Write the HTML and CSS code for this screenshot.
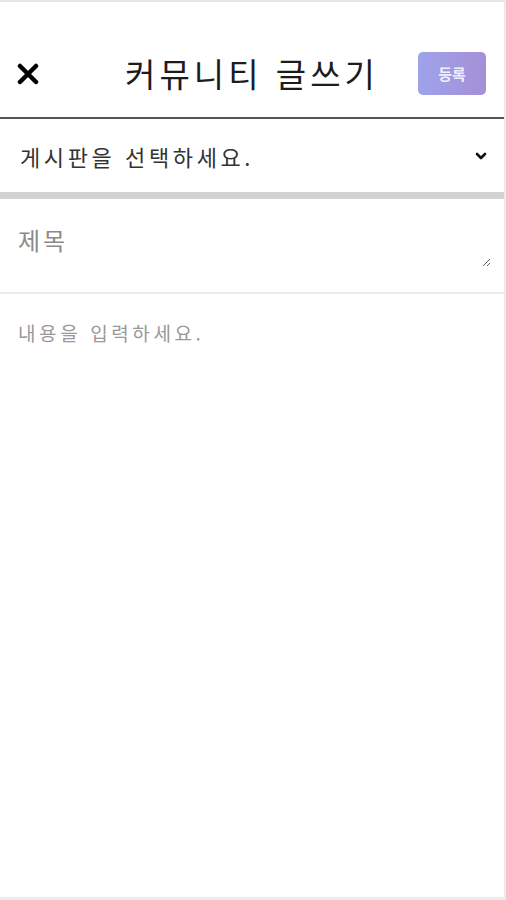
FILE: index.html
```html
<!DOCTYPE html>
<html lang="ko">
<head>
    <meta charset="UTF-8">
    <meta name="viewport" content="width=device-width, initial-scale=1.0">
    <title>커뮤니티 글쓰기</title>
    <link rel="stylesheet" href="styles.css">
</head>
<body>
    <div class="page">
        <div class="header">
            <button class="close-btn" aria-label="닫기">
                <svg width="22" height="22" viewBox="0 0 22 22">
                    <path d="M3 3 L19 19 M19 3 L3 19" stroke="#000" stroke-width="4.5" stroke-linecap="round"/>
                </svg>
            </button>
            <h1 class="title">커뮤니티 글쓰기</h1>
            <button class="submit-btn">등록</button>
        </div>
        <div class="board-select">
            <span class="board-text">게시판을 선택하세요.</span>
            <svg class="chevron" width="12" height="8" viewBox="0 0 12 8">
                <path d="M2 2 L6 6 L10 2" stroke="#111" stroke-width="2.6" fill="none" stroke-linecap="round" stroke-linejoin="round"/>
            </svg>
        </div>
        <div class="divider"></div>
        <div class="subject-row">
            <textarea class="subject" placeholder="제목"></textarea>
        </div>
        <textarea class="content" placeholder="내용을 입력하세요."></textarea>
    </div>
</body>
</html>
```

FILE: styles.css
```css
html, body {
    margin: 0;
    padding: 0;
    background: #fff;
}
body {
    font-family: "Noto Sans CJK KR", "Noto Sans", sans-serif;
}
.page {
    height: 900px;
    box-sizing: border-box;
    border-top: 2px solid #e6e6e6;
    border-right: 2px solid #ececec;
    border-bottom: 3px solid #ececec;
    display: flex;
    flex-direction: column;
}
.header {
    display: flex;
    align-items: center;
    justify-content: space-between;
    padding: 50px 18px 22px 17px;
    border-bottom: 2px solid #555;
}
.close-btn {
    width: 23px;
    height: 43px;
    padding: 0;
    border: none;
    background: none;
    display: flex;
    align-items: center;
}
.title {
    margin: 0 0 0 46px;
    font-size: 33px;
    font-weight: 400;
    color: #1c1c1c;
    line-height: 43px;
    letter-spacing: 4px;
}
.submit-btn {
    width: 68px;
    height: 43px;
    border: none;
    border-radius: 5px;
    background: linear-gradient(90deg, #9ea3ea, #a58fd6);
    color: #eef0ff;
    font-family: inherit;
    font-size: 15px;
    font-weight: 700;
}
.board-select {
    height: 73px;
    display: flex;
    align-items: center;
    justify-content: space-between;
    padding: 0 17px 0 20px;
}
.board-text {
    font-size: 22px;
    color: #333;
    letter-spacing: 3.6px;
}
.divider {
    height: 7px;
    background: #d3d3d3;
}
.subject-row {
    height: 95px;
    box-sizing: border-box;
    border-bottom: 2px solid #ececec;
    padding: 0 13px 0 16px;
}
textarea {
    display: block;
    width: 100%;
    box-sizing: border-box;
    border: none;
    outline: none;
    font-family: inherit;
    padding: 0;
    background: transparent;
}
.subject {
    margin-top: 23px;
    height: 45px;
    font-size: 24px;
    line-height: 36px;
    padding-left: 2px;
    letter-spacing: 3px;
    color: #333;
}
.subject::placeholder {
    color: #8a8a8a;
}
.content {
    flex: 1;
    resize: none;
    padding: 25px 18px;
    font-size: 19px;
    line-height: 28px;
    letter-spacing: 3.6px;
}
.content::placeholder {
    color: #999;
}
```
